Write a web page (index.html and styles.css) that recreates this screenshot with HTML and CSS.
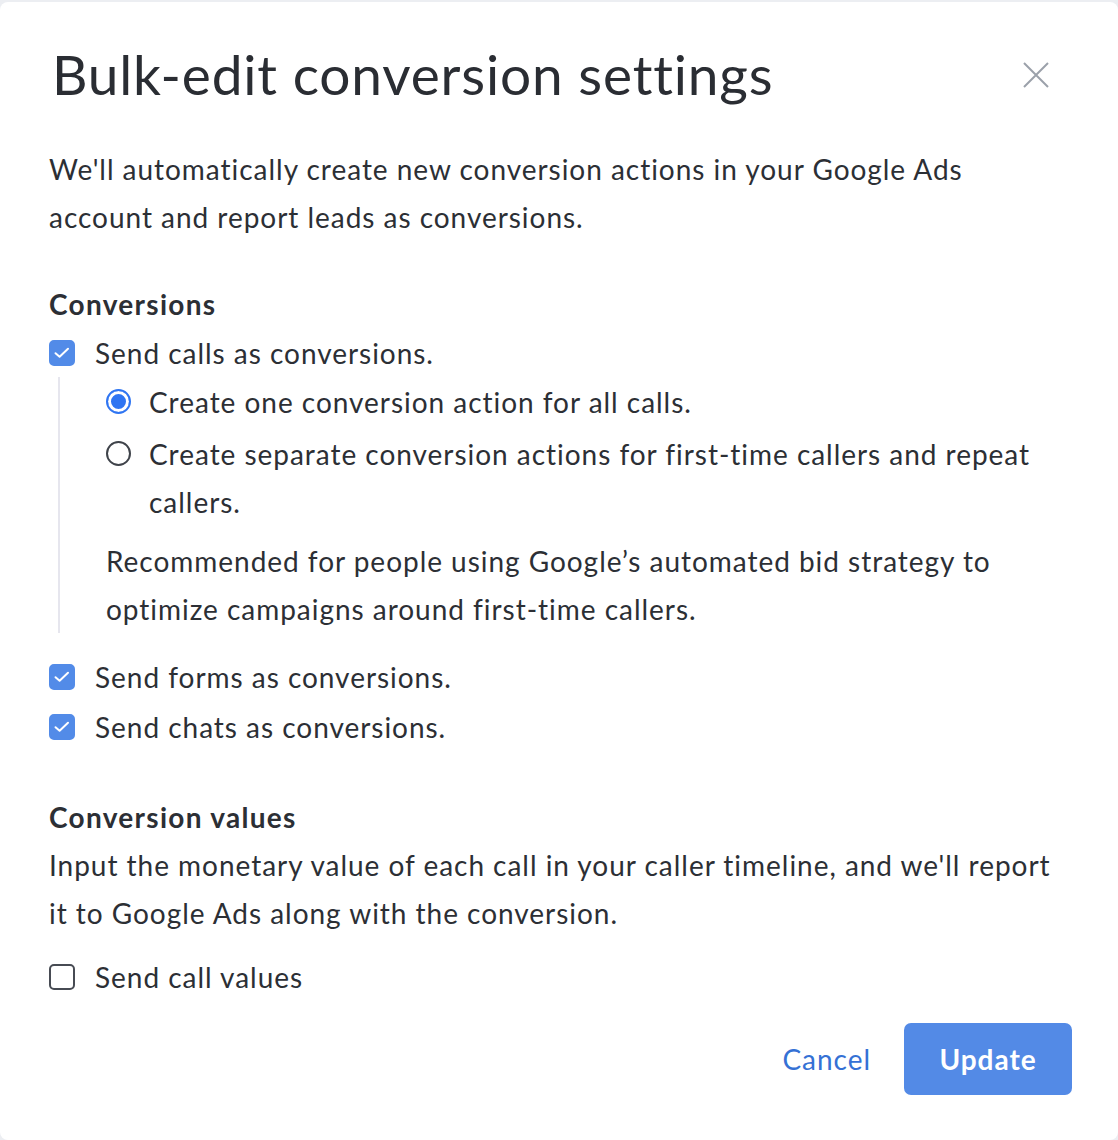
FILE: index.html
```html
<!DOCTYPE html>
<html lang="en">
<head>
<meta charset="utf-8">
<title>Bulk-edit conversion settings</title>
<link rel="stylesheet" href="styles.css">
</head>
<body>
<div class="modal">
  <header class="head">
    <h1 class="title">Bulk-edit conversion settings</h1>
    <button class="close" aria-label="Close">
      <svg width="26" height="26" viewBox="0 0 26 26"><path d="M1 1L25 25M25 1L1 25" stroke="currentColor" stroke-width="2" fill="none"/></svg>
    </button>
  </header>

  <p class="intro">We'll automatically create new conversion actions in your Google Ads account and report leads as conversions.</p>

  <section class="group">
    <h2 class="group-title">Conversions</h2>
    <label class="row row-first">
      <span class="box box-on"><svg width="26" height="26" viewBox="0 0 26 26"><path d="M6.5 13.2L10.6 16.8L19 8.8" stroke="#fff" stroke-width="2" fill="none" stroke-linecap="round" stroke-linejoin="round"/></svg></span>
      <span class="label">Send calls as conversions.</span>
    </label>
    <div class="sub">
      <label class="radio-row radio-first">
        <span class="radio radio-on"></span>
        <span class="label">Create one conversion action for all calls.</span>
      </label>
      <label class="radio-row radio-second">
        <span class="radio"></span>
        <span class="label">Create separate conversion actions for first-time callers and repeat callers.</span>
      </label>
      <p class="note">Recommended for people using Google’s automated bid strategy to optimize campaigns around first-time callers.</p>
    </div>
    <label class="row row-forms">
      <span class="box box-on"><svg width="26" height="26" viewBox="0 0 26 26"><path d="M6.5 13.2L10.6 16.8L19 8.8" stroke="#fff" stroke-width="2" fill="none" stroke-linecap="round" stroke-linejoin="round"/></svg></span>
      <span class="label">Send forms as conversions.</span>
    </label>
    <label class="row row-chats">
      <span class="box box-on"><svg width="26" height="26" viewBox="0 0 26 26"><path d="M6.5 13.2L10.6 16.8L19 8.8" stroke="#fff" stroke-width="2" fill="none" stroke-linecap="round" stroke-linejoin="round"/></svg></span>
      <span class="label">Send chats as conversions.</span>
    </label>
  </section>

  <section class="group group-values">
    <h2 class="group-title">Conversion values</h2>
    <p class="desc">Input the monetary value of each call in your caller timeline, and we'll report it to Google Ads along with the conversion.</p>
    <label class="row row-values">
      <span class="box"></span>
      <span class="label">Send call values</span>
    </label>
  </section>

  <footer class="actions">
    <button class="btn-link">Cancel</button>
    <button class="btn-primary">Update</button>
  </footer>
</div>
</body>
</html>
```

FILE: styles.css
```css
* { box-sizing: border-box; }

html, body {
  margin: 0;
  padding: 0;
}

body {
  background: #eceef2;
  font-family: "Lato", "Liberation Sans", sans-serif;
  color: #2c2f35;
  font-size: 28px;
  line-height: 48px;
  letter-spacing: 0.97px;
}

.modal {
  margin-top: 2px;
  background: #fff;
  border-radius: 8px;
  min-height: 1138px;
  padding: 36px 46px 0 49px;
}

.head {
  display: flex;
  align-items: center;
  justify-content: space-between;
  height: 72px;
}

.title {
  margin: 0 0 0 3px;
  font-size: 55px;
  font-weight: 400;
  line-height: 72px;
  letter-spacing: 0.82px;
  color: #2a2d33;
}

.close {
  border: 0;
  background: none;
  padding: 0;
  margin: 2px 23px 0 0;
  color: #9ba1aa;
  display: flex;
  cursor: pointer;
}

.intro {
  margin: 35px 0 0;
}

.group {
  margin-top: 39px;
}

.group-title {
  margin: 0;
  font-size: 28px;
  font-weight: 700;
  line-height: 48px;
  letter-spacing: 1.3px;
}

.row {
  display: flex;
  align-items: center;
  gap: 20px;
  height: 48px;
}

.row-first { margin-top: 1px; }
.row-forms { margin-top: 20px; }
.row-chats { margin-top: 2px; }

.box {
  flex: none;
  width: 26px;
  height: 26px;
  border-radius: 5px;
  border: 2px solid #474b53;
  display: flex;
  align-items: center;
  justify-content: center;
}

.box-on {
  background: #528be8;
  border-color: #528be8;
}

.box svg {
  flex: none;
}

.sub {
  margin-left: 9px;
  border-left: 2px solid #e6e6ee;
  padding: 1px 0 0 46px;
}

.radio-row {
  display: flex;
  align-items: flex-start;
  gap: 18px;
}

.radio-second { margin-top: 4px; }

.radio {
  flex: none;
  width: 25px;
  height: 25px;
  margin-top: 11px;
  border-radius: 50%;
  border: 2px solid #3f434a;
  background: #fff;
}

.radio-on {
  border-color: #2f75f2;
  box-shadow: inset 0 0 0 3px #fff, inset 0 0 0 12px #2f75f2;
}

.note {
  margin: 11px 0 0;
}

.group-values {
  margin-top: 42px;
}

.desc {
  margin: 0;
}

.row-values { margin-top: 16px; }

.actions {
  display: flex;
  justify-content: flex-end;
  align-items: center;
  gap: 33px;
  margin-top: 22px;
}

.btn-link {
  border: 0;
  background: none;
  padding: 0;
  font: inherit;
  letter-spacing: 0.97px;
  color: #3571d5;
  cursor: pointer;
}

.btn-primary {
  border: 0;
  width: 168px;
  height: 72px;
  border-radius: 7px;
  background: #538ae6;
  color: #fff;
  font: inherit;
  font-weight: 700;
  letter-spacing: 0.97px;
  cursor: pointer;
}
```
